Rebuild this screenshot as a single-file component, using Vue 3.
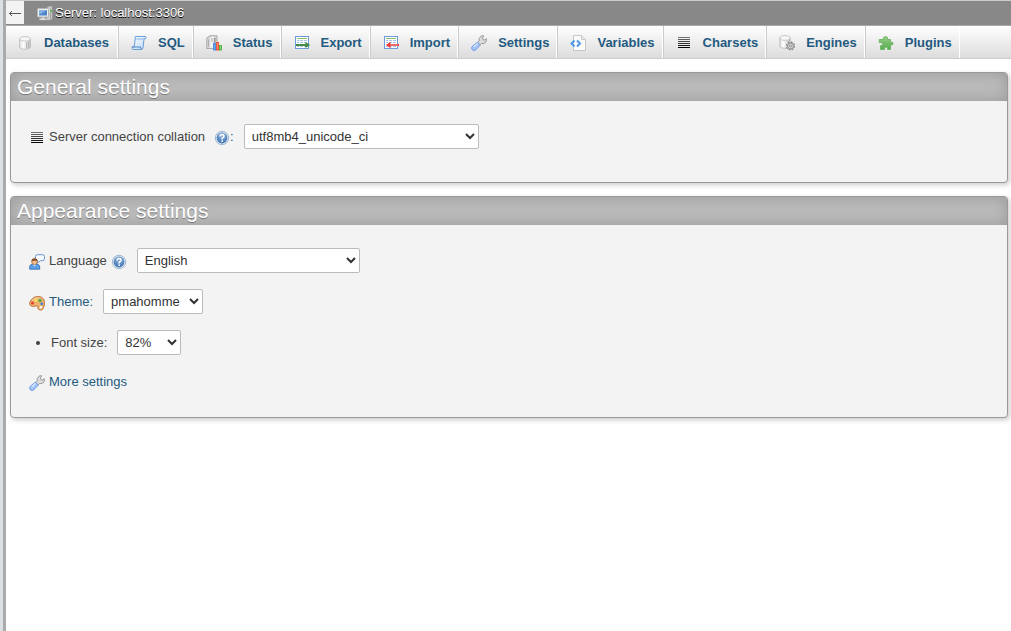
<script setup>
import { ref } from 'vue'

const tabs = [
  { label: 'Databases', icon: 'i-database' },
  { label: 'SQL', icon: 'i-sql' },
  { label: 'Status', icon: 'i-status' },
  { label: 'Export', icon: 'i-export' },
  { label: 'Import', icon: 'i-import' },
  { label: 'Settings', icon: 'i-wrench' },
  { label: 'Variables', icon: 'i-variables' },
  { label: 'Charsets', icon: 'i-charset' },
  { label: 'Engines', icon: 'i-engine' },
  { label: 'Plugins', icon: 'i-plugin' },
]

const collation = ref('utf8mb4_unicode_ci')
const language = ref('English')
const theme = ref('pmahomme')
const fontSize = ref('82%')
</script>

<template>
  <svg class="sprite" aria-hidden="true">
    <defs>
      <linearGradient id="g-cyl" x1="0" x2="1" y1="0" y2="0">
        <stop offset="0" stop-color="#dedede" />
        <stop offset=".35" stop-color="#ffffff" />
        <stop offset="1" stop-color="#bdbdbd" />
      </linearGradient>
      <linearGradient id="g-scroll" x1="0" x2="1" y1="0" y2="1">
        <stop offset="0" stop-color="#ffffff" />
        <stop offset="1" stop-color="#b9d6f5" />
      </linearGradient>
      <linearGradient id="g-plug" x1="0" x2="0" y1="0" y2="1">
        <stop offset="0" stop-color="#9ad08c" />
        <stop offset="1" stop-color="#54a94c" />
      </linearGradient>
      <radialGradient id="g-help" cx=".5" cy=".3" r=".7">
        <stop offset="0" stop-color="#8fb5e0" />
        <stop offset="1" stop-color="#3f72b0" />
      </radialGradient>
      <linearGradient id="g-lines" x1="0" x2="0" y1="0" y2="1">
        <stop offset="0" stop-color="#777" />
        <stop offset="1" stop-color="#000" />
      </linearGradient>
    </defs>

    <symbol id="i-server" viewBox="0 0 16 16">
      <path d="M9.500 3 11.500 1h4v12.500l-2 2h-4z" fill="#c9c9c9" stroke="#8a8a8a" stroke-width=".8" />
      <path d="M13.500 3.500v11" stroke="#a0a0a0" />
      <path d="M10 4.500h3M10 6.500h3" stroke="#eee" />
      <rect x="13" y="5" width="2" height="2" fill="#59b94f" />
      <rect x=".5" y="3.500" width="11" height="8.500" rx="1" fill="#efefef" stroke="#b5b5b5" />
      <rect x="2" y="5" width="8" height="5.500" fill="#4c86c8" />
      <path d="M2 5h8L2 10z" fill="#83b1e2" />
      <path d="M4.500 12.500h3v1h2v1.500h-7v-1.500h2z" fill="#e4e4e4" stroke="#b5b5b5" stroke-width=".5" />
    </symbol>

    <symbol id="i-database" viewBox="0 0 16 16">
      <path d="M2.500 4v8c0 3 11 3 11 0V4z" fill="url(#g-cyl)" stroke="#c0c0c0" stroke-width=".9" />
      <ellipse cx="8" cy="3.800" rx="5.500" ry="2.300" fill="#f6f6f6" stroke="#c4c4c4" stroke-width=".9" />
      <path d="M9.500 7.500v6M11.500 7v6" stroke="#b5b5b5" />
    </symbol>

    <symbol id="i-sql" viewBox="0 0 16 16">
      <path d="M4.500 1.500h10q1.500 1.500-.5 2.500h-1l-1 9q-.5 1.500-2 1.500H2q-1.500-.5-1-2.500h2.200z" fill="url(#g-scroll)" stroke="#6b9fd8" />
      <path d="M4.500 1.500q-1 1.500.8 2.500H14" fill="none" stroke="#8db8e6" />
      <path d="M1 12h8.500q0 2 1.500 2.300" fill="none" stroke="#4f87c6" />
    </symbol>

    <symbol id="i-status" viewBox="0 0 16 16">
      <path d="M.7 3 4 .7h7V11l-3 2.500H.7z" fill="#d4d4d4" stroke="#a0a0a0" stroke-width=".8" />
      <path d="M4 2.500 7.500 1v12H4z" fill="#efefef" />
      <path d="M8.800 3v9" stroke="#9c9c9c" stroke-width="1.500" />
      <path d="M2.500 4.500v7M5 4h2M5 6h2" stroke="#b0b0b0" />
      <rect x="7.500" y="8.500" width="2" height="6.500" fill="#68a8f0" stroke="#4f8fe0" />
      <rect x="10.500" y="7.500" width="2" height="7.500" fill="#ff8a6c" stroke="#ee5a3e" />
      <rect x="13.500" y="10.500" width="2" height="4.500" fill="#86d570" stroke="#5cb34a" />
    </symbol>

    <symbol id="i-table" viewBox="0 0 16 16">
      <rect x="1.500" y="1.500" width="13" height="12" fill="#fff" stroke="#6d9bd8" />
      <path d="M3 3.500h10" stroke="#8fbe68" />
      <path d="M3 5.500h10M3 7.500h10M3 9.500h10M3 11.500h10" stroke="#a9c4e6" />
      <path d="M5.500 4.500v8M9.500 4.500v8" stroke="#fff" />
    </symbol>

    <symbol id="i-export" viewBox="0 0 16 16">
      <use href="#i-table" />
      <path d="M2 9h9.500V7L16 10l-4.500 3v-2H2z" fill="#36803b" />
      <path d="M3 10h11" stroke="#62a55a" stroke-width=".7" />
    </symbol>

    <symbol id="i-import" viewBox="0 0 16 16">
      <use href="#i-table" />
      <path d="M16 9H7.500V6.700L3 10l4.500 3.300V11H16z" fill="#e93b38" />
      <path d="M7 10h8" stroke="#ff9a92" />
    </symbol>

    <symbol id="i-wrench" viewBox="0 0 16 16">
      <path d="M8 6.500Q7.500 3 10 1.200q1.500-.9 2.700-.4L11.500 3l.6 1.800 1.800.3 1.300-1.500q.8 2.500-.7 4-1.800 1.500-4 .9L9 9.800 6.500 7.800z" fill="#dcdcdc" stroke="#929292" stroke-width=".9" />
      <path d="M6.200 7.200 9.300 10l-4.500 4.900q-1.500 1.300-3.300.1-1.800-1.700-.4-3.500z" fill="#a3c3f6" stroke="#6b98e0" stroke-width=".9" />
      <path d="m2.800 12 3.700-3.700" stroke="#d5e5ff" stroke-width="1.500" />
    </symbol>

    <symbol id="i-variables" viewBox="0 0 16 16">
      <path d="M3.500.5h8l4 4v11h-12z" fill="#fafafa" stroke="#c6c6c6" />
      <path d="M11.500.5v4h4" fill="#e7e7e7" stroke="#cccccc" />
      <path d="M4.500 5.500 1.500 8.500l3 3M7 5.500l3 3-3 3" fill="none" stroke="#4f9ae8" stroke-width="2" />
    </symbol>

    <symbol id="i-charset" viewBox="0 0 16 16">
      <path d="M2 2h12v1H2zM2 4h12v1H2zM2 6h12v1H2zM2 8h12v1H2zM2 10h12v1H2zM2 12h12v1H2z" fill="url(#g-lines)" />
    </symbol>

    <symbol id="i-engine" viewBox="0 0 16 16">
      <path d="M.8 3v8c0 3 10.400 3 10.400 0V3z" fill="url(#g-cyl)" stroke="#bcbcbc" stroke-width=".9" />
      <ellipse cx="6" cy="3" rx="5.200" ry="2.300" fill="#f7f7f7" stroke="#c0c0c0" stroke-width=".9" />
      <circle cx="11.500" cy="11" r="3.900" fill="#ccc" stroke="#808080" stroke-width="1.300" stroke-dasharray="1.600 1.460" />
      <circle cx="11.500" cy="11" r="2.900" fill="#dcdcdc" stroke="#8a8a8a" stroke-width=".9" />
      <circle cx="11.500" cy="11" r="1.100" fill="#fff" stroke="#777" stroke-width=".8" />
    </symbol>

    <symbol id="i-plugin" viewBox="0 0 16 16">
      <path d="M5.500 4.500Q4.800 1.500 7.500 1.500t2 3h3V7.500q2.500-1.200 2.500 1t-2.500 1.200v4.800H9.500q.6-2.500-1.500-2.500t-1.500 2.500H2.500v-4q2.500.3 2.500-1.500T1.200 7.500v-3z" fill="url(#g-plug)" stroke="#6db564" stroke-width=".9" />
    </symbol>

    <symbol id="i-help" viewBox="0 0 16 16">
      <circle cx="8" cy="8" r="6.700" fill="#dde7f2" stroke="#8fa8c6" stroke-width=".8" />
      <circle cx="8" cy="8" r="5.400" fill="url(#g-help)" />
      <path d="M6 6.500Q6 4.600 8 4.600t2 1.700Q10 7.500 8.200 8.300V9.500" fill="none" stroke="#fff" stroke-width="1.500" />
      <rect x="7.400" y="10.400" width="1.600" height="1.500" fill="#fff" />
    </symbol>

    <symbol id="i-language" viewBox="0 0 16 16">
      <path d="M8.500.7h5q2 0 2 2v2q0 2-2 2h-2L8.500 9V6.500Q6.500 6 6.500 4.500v-2q0-1.800 2-1.800z" fill="#f7fbff" stroke="#5e94cf" />
      <path d="M.7 15.200q-.5-5 2.500-5h5q3 0 2.500 5z" fill="#5b9fe9" stroke="#2b65ac" stroke-width=".8" />
      <path d="m4 10.500 1.500 1.700L7 10.500z" fill="#fff" />
      <circle cx="5.500" cy="7.700" r="2.800" fill="#f4bf90" stroke="#a8683a" stroke-width=".7" />
      <path d="M2.500 7.500Q2.500 4.200 5.500 4.200T8.500 7Q5 6.200 2.500 7.500z" fill="#8a4f29" />
    </symbol>

    <symbol id="i-theme" viewBox="0 0 16 16">
      <path d="M7.500 1.500Q13 .8 15.200 5q1.200 5-1.200 9-2 2-4 .8Q8 13.500 9 12q.3-1.500-2-1-3.500 1.200-5.500-.3Q-.8 8.500 2 5t5.500-3.500z" fill="#edb070" stroke="#b97840" stroke-width=".9" />
      <path d="M3 5.500q3.500-3 7-2.500" fill="none" stroke="#f8d3a2" />
      <circle cx="3.500" cy="8" r="1.500" fill="#e33b2e" />
      <circle cx="7" cy="5.500" r="1.500" fill="#f8e451" />
      <circle cx="11" cy="5.500" r="1.600" fill="#49a844" />
      <circle cx="12.800" cy="8.800" r="1.400" fill="#3e7fd6" />
      <circle cx="12" cy="12.300" r="1.300" fill="#fff" />
    </symbol>
  </svg>

  <div class="page">
    <div class="resizer"></div>
    <main class="content">
      <header class="serverinfo">
        <button class="collapse" type="button" aria-label="Hide panel">
          <svg width="14" height="10" viewBox="0 0 14 10"><path d="M1 5.500h12M4 3 1.500 5.500 4 8" fill="none" stroke="#555" /></svg>
        </button>
        <svg class="icon"><use href="#i-server" /></svg>
        <a class="server" href="#">Server: localhost:3306</a>
      </header>

      <nav class="tabs">
        <a v-for="tab in tabs" :key="tab.label" class="tab" href="#">
          <svg class="icon"><use :href="'#' + tab.icon" /></svg>
          <span>{{ tab.label }}</span>
        </a>
      </nav>

      <section class="panel">
        <h2>General settings</h2>
        <div class="rows">
          <div class="row">
            <svg class="icon"><use href="#i-charset" /></svg>
            <label class="label-wide" for="collation">Server connection collation</label>
            <a class="help" href="#" aria-label="Documentation"><svg class="icon"><use href="#i-help" /></svg>:</a>
            <select id="collation" v-model="collation" class="select-collation">
              <option>utf8mb4_unicode_ci</option>
            </select>
          </div>
        </div>
      </section>

      <section class="panel">
        <h2>Appearance settings</h2>
        <div class="rows rows-list">
          <div class="row">
            <svg class="icon"><use href="#i-language" /></svg>
            <label class="label-language" for="language">Language</label>
            <a class="help" href="#" aria-label="Documentation"><svg class="icon"><use href="#i-help" /></svg></a>
            <select id="language" v-model="language" class="select-language">
              <option>English</option>
            </select>
          </div>
          <div class="row">
            <svg class="icon"><use href="#i-theme" /></svg>
            <label for="theme"><a href="#">Theme:</a></label>
            <select id="theme" v-model="theme" class="select-theme">
              <option>pmahomme</option>
            </select>
          </div>
          <div class="row">
            <span class="bullet"></span>
            <label for="fontsize">Font size:</label>
            <select id="fontsize" v-model="fontSize" class="select-size">
              <option>82%</option>
            </select>
          </div>
          <div class="row row-link">
            <svg class="icon"><use href="#i-wrench" /></svg>
            <a href="#">More settings</a>
          </div>
        </div>
      </section>
    </main>
  </div>
</template>

<style>
body {
  margin: 0;
  background: #fff;
}
</style>

<style scoped>
.sprite {
  position: absolute;
  width: 0;
  height: 0;
}
.page {
  display: flex;
  min-height: 100vh;
  font: 13px/16px "Liberation Sans", Arial, sans-serif;
  color: #444;
}
.page a {
  color: #235a81;
  text-decoration: none;
}
.resizer {
  flex: none;
  width: 3px;
  background: #dbe0e4;
  border-right: 3px solid #aaa;
}
.content {
  flex: 1;
  min-width: 0;
}
.icon {
  display: block;
  flex: none;
  width: 16px;
  height: 16px;
}
.serverinfo {
  display: flex;
  align-items: center;
  height: 24px;
  border-top: 1px solid #ccc;
  background: #888;
}
.collapse {
  display: flex;
  align-items: center;
  justify-content: center;
  width: 18px;
  height: 23px;
  margin: 0 13px 0 0;
  padding: 0;
  border: 0;
  align-self: flex-start;
  background: #f3f3f3;
}
.page .server {
  margin-left: 2px;
  color: #fff;
  text-shadow: 0 1px 0 #000;
}
.tabs {
  display: flex;
  border-top: 1px solid #aaa;
  border-bottom: 1px solid #ccc;
  background: linear-gradient(#fff, #dcdcdc);
}
.tab {
  display: flex;
  align-items: center;
  gap: 11px;
  height: 31px;
  padding: 1px 7px 0 12px;
  border-left: 1px solid #ccc;
  border-right: 1px solid #fff;
  font-weight: bold;
}
.tab:first-child {
  padding: 1px 8px 0 11px;
  border-left: 0;
}
.panel {
  margin: 13px 3px 0 4px;
  border: 1px solid #999;
  border-radius: 4px;
  background: #f3f3f3;
  box-shadow: 2px 2px 5px #ccc;
}
h2 {
  margin: 0;
  padding: 0 6px;
  border-radius: 3px 3px 0 0;
  background: #bbb;
  box-shadow: inset 0 0 15px #999;
  color: #fff;
  font-size: 21px;
  font-weight: normal;
  line-height: 28px;
  text-shadow: 0 1px 0 #777;
}
.rows {
  display: flex;
  flex-direction: column;
  gap: 16px;
  padding: 23px 18px 33px;
}
.rows-list {
  padding-bottom: 24px;
}
.row {
  display: flex;
  align-items: center;
}
.row > .icon {
  position: relative;
  top: 1px;
  margin-right: 4px;
}
.label-wide {
  margin-right: 9px;
}
.label-language {
  margin-right: 4px;
}
.help {
  display: flex;
}
.help .icon {
  position: relative;
  top: 1px;
}
select {
  box-sizing: border-box;
  height: 25px;
  margin: 0 0 0 10px;
  padding: 0 3px;
  border: 1px solid #bbb;
  border-radius: 2px;
  background: #fff;
  color: #333;
  font: inherit;
}
.select-collation {
  width: 235px;
}
.select-language {
  width: 223px;
}
.select-theme {
  width: 100px;
}
.select-size {
  width: 64px;
}
.bullet {
  width: 4px;
  height: 4px;
  margin: 0 11px 0 7px;
  border-radius: 50%;
  background: #444;
}
.row-link {
  padding: 3px 0;
}
</style>
